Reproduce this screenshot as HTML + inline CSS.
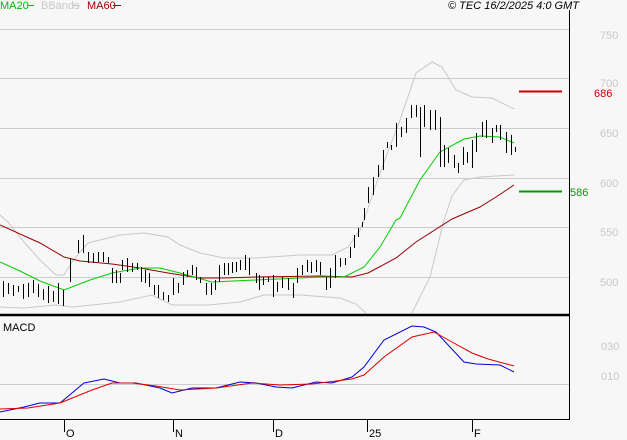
<!DOCTYPE html><html><head><style>body{margin:0;background:#f7f7f7}svg{display:block}text{font-family:"Liberation Sans",sans-serif;font-size:11px}</style></head><body>
<svg width="627" height="440" xmlns="http://www.w3.org/2000/svg">
<rect width="627" height="440" fill="#f7f7f7"/>
<g stroke="#cccccc" stroke-width="1">
<path d="M0 29.5H569M0 78.5H569M0 128.5H569M0 178.5H569M0 227.5H569M0 277.5H569M0 384.5H569"/>
</g>
<g fill="#c8c8c8" font-size="11">
<text x="600" y="39">750</text><text x="600" y="87">700</text><text x="600" y="137">650</text><text x="600" y="187">600</text><text x="600" y="236">550</text><text x="600" y="286">500</text>
<text x="601" y="350">030</text><text x="601" y="380">010</text>
</g>
<path d="M569.5 10V420M0 419.5H569" stroke="#000" fill="none"/>
<path d="M0 315H569" stroke="#000" stroke-width="2.5"/>
<path d="M64.5 420V432M173.5 420V432M273.5 420V432M367.5 420V432M472.5 420V432" stroke="#000"/>
<g fill="#000" font-size="11"><text x="66" y="437">O</text><text x="175" y="437">N</text><text x="275" y="437">D</text><text x="369" y="437">25</text><text x="474" y="437">F</text></g>
<text x="3" y="331" fill="#000" font-size="10">MACD</text>
<text x="0" y="9" fill="#00bb00" font-size="10">MA20</text><path d="M28 5.5H34" stroke="#00bb00"/>
<text x="41" y="9" fill="#c8c8c8" font-size="10">BBands</text><path d="M72 5.5H80" stroke="#c8c8c8"/>
<text x="87" y="9" fill="#990000" font-size="10">MA60</text><path d="M113 5.5H121" stroke="#990000"/>
<text x="448" y="9" fill="#000" font-size="10" font-style="italic">© TEC 16/2/2025 4:0 GMT</text>
<path d="M519 91.5H562" stroke="#cc0000" stroke-width="2"/><text x="594" y="97" fill="#cc0000">686</text>
<path d="M519 191.5H562" stroke="#009900" stroke-width="2"/><text x="570" y="196" fill="#009900">586</text>
<g fill="none" stroke="#c8c8c8">
<polyline points="0,215 8,222 24,242 40,260 56,275 64,275 72,262 80,252 88,243 120,235 144,233 168,237 180,245 200,253 224,258 256,258 300,255 332,255 348,247 360,230 364,220 380,173 400,120 416,73 432,62 442,67 456,90 472,97 492,98 514,109"/>
<polyline points="0,307 24,308 56,305 72,307 92,305 120,302 152,295 172,305 208,305 240,302 264,295 300,295 340,298 356,304 366,313"/>
<polyline points="412,313 430,277 444,220 452,196 464,180 480,177 514,175"/>
</g>
<polyline fill="none" stroke="#990000" points="0,225 40,243 64,257 80,261 112,264 140,268 168,273 200,278 224,278 256,277 320,276 352,277 368,273 396,258 416,242 452,219 480,207 496,197 514,185"/>
<polyline fill="none" stroke="#00cc00" points="0,262 20,271 40,281 64,290 90,280 112,273 140,268 160,268 180,273 212,282 256,280 300,278 320,277 344,277 364,267 380,247 396,220 400,218 420,180 440,152 464,139 480,136 500,137 514,143"/>
<path fill="none" stroke="#000" shape-rendering="crispEdges" transform="translate(0.5,0)" d="
M3 281V297M8 283V294M13 285V296M18 286V292M23 284V299M28 283V297M33 280V293M38 284V297M43 289V300M48 286V303M53 291V302M58 283V304M63 290V306
M70 258V282M78 240V253M83 235V253M88 252V263M93 253V263M98 252V262M103 252V262M108 257V263M112 268V283M116 270V283M120 273V283M122 260V270M127 258V272M132 263V272M137 263V270M141 267V282M145 270V283M149 273V287M154 285V295M158 285V298M163 292V300M168 295V302M173 278V295M178 283V293M183 272V285M187 270V277M192 265V275M196 267V280M200 277V283M206 283V295M211 283V295M215 280V290M219 265V282M224 263V275M228 263V275M232 262V273M236 262V272M240 260V270M245 255V270M249 258V275M256 273V283M259 275V290M263 277V285M268 277V282M273 275V297M277 282V292M282 277V288M288 278V290M293 283V298M297 268V283M302 265V275M307 260V272M311 262V273M316 260V272M320 262V275M326 277V290M330 268V288M335 255V278M340 258V267M345 258V265M350 247V258M354 235V248M358 228V237M362 222V227
M364 208V220M368 187V203M373 177V195M378 165V177M383 150V170M387 142V148M391 145V150M396 123V147M401 127V137M406 118V133M411 105V118M416 105V117M420 107V157M424 105V127M430 110V130M435 110V130M440 117V167M444 145V167M448 148V163M454 155V168M458 163V173M463 147V165M467 152V163M472 140V168M476 133V152M482 122V137M486 120V138M492 128V143M496 125V132M500 125V140M506 132V153M511 135V155M515 147V152"/>
<polyline fill="none" stroke="#0000dd" points="0,412 24,407 40,403 60,403 84,383 104,379 120,383 136,383 160,388 172,393 192,388 216,388 240,382 256,383 276,387 292,388 316,382 332,383 352,377 364,367 384,340 412,326 424,327 436,332 464,362 476,364 500,365 514,372"/>
<polyline fill="none" stroke="#dd0000" points="0,409 28,408 60,403 92,390 112,383 132,383 156,386 180,390 216,388 252,383 280,385 312,384 352,379 364,375 384,357 412,337 434,332 452,342 472,353 488,359 514,366"/>
</svg>
</body></html>
